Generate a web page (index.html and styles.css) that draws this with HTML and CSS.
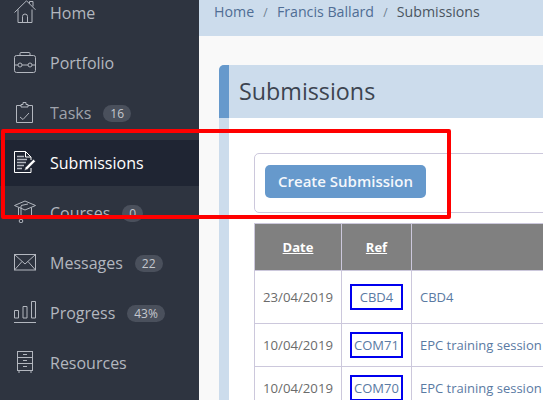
FILE: index.html
```html
<!DOCTYPE html>
<html lang="en">
<head>
    <meta charset="UTF-8">
    <meta name="viewport" content="width=device-width, initial-scale=1.0">
    <title>Submissions</title>
    <link rel="stylesheet" href="styles.css">
</head>
<body>
    <div class="layout">
        <!-- Sidebar -->
        <nav class="sidebar">
            <a class="nav-item" href="#">
                <svg class="nav-icon" viewBox="0 0 22 23"><path d="M.5 12.500 12.500.8l9 9M15.500 3.500V1.500h3.500v5M4 9.500v13h14V9.500M8.500 22.500V16.500a2.500 2.500 0 0 1 5 0v6"/></svg>
                <span>Home</span>
            </a>
            <a class="nav-item" href="#">
                <svg class="nav-icon" viewBox="0 0 22 23"><rect x=".5" y="5.500" width="21" height="17" rx="2"/><path d="M6 5.500V3.500a1 1 0 0 1 1-1h8a1 1 0 0 1 1 1v2M.5 15H4M8 15h6M18 15h3.500"/><circle cx="6" cy="15" r="2"/><circle cx="16" cy="15" r="2"/></svg>
                <span>Portfolio</span>
            </a>
            <a class="nav-item" href="#">
                <svg class="nav-icon" viewBox="0 0 22 23"><path d="M7 5.500H2.500v17h16v-17H14M7 7V4.500h2V2.500h3v2h2V7zM6 17l3 2.500 6-6.500"/></svg>
                <span class="dim">Tasks</span>
                <span class="badge">16</span>
            </a>
            <a class="nav-item active" href="#">
                <svg class="nav-icon" viewBox="0 0 22 23"><path d="M17 10V7l-5.500-5.500H.5v21H17V18M11.500 1.500V7H17"/><path class="doc-lines" d="M3 6.500h7M3 9.500h10M3 12.500h9M3 15.500h7M3 18.500h5"/><path class="pen" d="M10.500 20.500l.8-3 8.200-8.200 2 2-8.200 8.200z"/></svg>
                <span>Submissions</span>
            </a>
            <a class="nav-item" href="#">
                <svg class="nav-icon" viewBox="0 0 22 23"><path d="M11 1 .5 5.500 11 10l10.500-4.500zM4.500 7.500V15c3 2.500 10 2.500 13 0V7.500M7 5.500l7-1.500M7 6v13"/><circle cx="7" cy="21" r="1.800"/></svg>
                <span>Courses</span>
                <span class="badge">0</span>
            </a>
            <a class="nav-item" href="#">
                <svg class="nav-icon" viewBox="0 0 22 23"><rect x=".5" y="4.500" width="21" height="15.500"/><path d="M.5 4.500 11 14 21.500 4.500M.5 20l7.500-8.500M21.500 20 14 11.500"/></svg>
                <span>Messages</span>
                <span class="badge">22</span>
            </a>
            <a class="nav-item" href="#">
                <svg class="nav-icon" viewBox="0 0 22 23"><path d="M0 22.500h22M.5 10.500h4v7.500h-4zM9 6.500h4V18H9zM17.500 1.500h4V18h-4z"/></svg>
                <span>Progress</span>
                <span class="badge">43%</span>
            </a>
            <a class="nav-item" href="#">
                <svg class="nav-icon" viewBox="0 0 22 23"><rect x="3.500" y="1.500" width="15" height="19"/><path d="M3.500 7.500h15M3.500 13.500h15M9 4.500h4M9 10.500h4M9 16.500h4M5 20.500V23M17 20.500V23"/></svg>
                <span>Resources</span>
            </a>
        </nav>

        <main class="content">
            <div class="breadcrumb">
                <a href="#">Home</a>
                <span class="sep">/</span>
                <a href="#">Francis Ballard</a>
                <span class="sep">/</span>
                <span class="current">Submissions</span>
            </div>

            <section class="panel">
                <h1 class="panel-title">Submissions</h1>
                <div class="panel-body">
                    <div class="toolbar">
                        <a class="btn" href="#">Create Submission</a>
                    </div>
                    <table class="grid">
                        <thead>
                            <tr>
                                <th class="col-date"><a href="#">Date</a></th>
                                <th class="col-ref"><a href="#">Ref</a></th>
                                <th><a href="#">Subject</a></th>
                            </tr>
                        </thead>
                        <tbody>
                            <tr class="row-tall">
                                <td class="cell-date">23/04/2019</td>
                                <td class="cell-ref"><a class="ref" href="#">CBD4</a></td>
                                <td><a href="#">CBD4</a></td>
                            </tr>
                            <tr>
                                <td class="cell-date">10/04/2019</td>
                                <td class="cell-ref"><a class="ref" href="#">COM71</a></td>
                                <td><a href="#">EPC training session</a></td>
                            </tr>
                            <tr>
                                <td class="cell-date">10/04/2019</td>
                                <td class="cell-ref"><a class="ref" href="#">COM70</a></td>
                                <td><a href="#">EPC training session</a></td>
                            </tr>
                        </tbody>
                    </table>
                </div>
            </section>
        </main>
    </div>

    <!-- Highlight drawn over the screenshot -->
    <div class="highlight"></div>
</body>
</html>
```

FILE: styles.css
```css
html, body {
    margin: 0;
    height: 100%;
    overflow: hidden;
}
body {
    font-family: "Open Sans", sans-serif;
    font-size: 14px;
    color: #555;
    background-color: #f9f9f9;
}
a {
    text-decoration: none;
}
.layout {
    display: flex;
    height: 400px;
}

/* Sidebar */
.sidebar {
    width: 199px;
    flex: none;
    background-color: #2e3440;
    overflow: hidden;
}
.nav-item {
    display: flex;
    align-items: center;
    height: 46px;
    margin-bottom: 4px;
    padding-left: 14px;
    color: #b3b7bf;
    font-size: 16px;
    position: relative;
    top: -10px;
}
.nav-item.active {
    background-color: #1f2533;
    color: #fff;
}
.nav-icon {
    width: 22px;
    height: 23px;
    flex: none;
    margin: -3px 14px 0 0;
    fill: none;
    stroke: currentColor;
    stroke-width: 1;
}
.active .nav-icon .pen {
    fill: #fff;
    stroke: #1f2533;
    stroke-width: .6;
}
.active .nav-icon .doc-lines {
    stroke: #b3b7bf;
    stroke-width: 1.4;
}
.dim {
    opacity: 0.85;
}
.badge {
    margin-left: 12px;
    padding: 0 7px;
    height: 17px;
    line-height: 17px;
    border-radius: 9px;
    background-color: #4a505c;
    color: #c5c8ce;
    font-size: 12px;
}

/* Main area */
.content {
    flex: none;
    width: 900px;
}
.breadcrumb {
    height: 36px;
    box-sizing: border-box;
    padding: 1px 0 0 15px;
    line-height: 21px;
    background-color: #ccdcec;
    font-size: 14.2px;
}
.breadcrumb a {
    color: #4f6d94;
}
.breadcrumb .sep {
    margin: 0 5.500px;
    color: #6f7f90;
    font-size: 12px;
}
.breadcrumb .current {
    color: #4a5560;
}
.panel {
    margin: 29px 0 0 20px;
    border-left: 10px solid #ccdcec;
    border-radius: 5px 0 0 0;
    background-color: #fff;
    position: relative;
}
.panel-title {
    margin: 0 0 0 -10px;
    height: 53px;
    box-sizing: border-box;
    padding-left: 10px;
    border-left: 10px solid #6699cc;
    border-radius: 5px 0 0 0;
    background-color: #ccdcec;
    font-size: 23.3px;
    font-weight: 400;
    line-height: 52px;
    color: #3c4450;
}
.panel-body {
    padding: 35px 0 0 25px;
}
.toolbar {
    box-sizing: border-box;
    height: 60px;
    padding: 11px 10px;
    border: 1px solid #ccc8dc;
    border-radius: 5px;
    margin-bottom: 10px;
}
.btn {
    display: block;
    width: 161px;
    height: 33px;
    line-height: 33px;
    text-align: center;
    border-radius: 5px;
    background-color: #6699cc;
    color: #f4f7fb;
    font-size: 15px;
    font-weight: 600;
}
.grid {
    width: 100%;
    border-collapse: collapse;
    font-size: 13px;
}
.grid th, .grid td {
    border: 1px solid #ccc8dc;
}
.grid th {
    height: 46px;
    background-color: #808080;
    padding: 0;
    font-size: 13px;
}
.grid th a {
    color: #fff;
    text-decoration: underline;
}
.col-date {
    width: 86px;
}
.col-ref {
    width: 69px;
}
.grid td {
    height: 42px;
    padding: 0 8px;
}
.grid td a {
    color: #5a7aa3;
}
.row-tall td {
    height: 52px;
}
.grid .cell-date {
    padding: 0;
    text-align: center;
    font-size: 13.200px;
    color: #6b6b6b;
}
.grid .cell-ref {
    padding: 0;
    text-align: center;
}
.ref {
    display: inline-block;
    box-sizing: border-box;
    width: 53px;
    height: 26px;
    line-height: 22px;
    border: 2px solid #0000ee;
    vertical-align: middle;
}

/* Highlight */
.highlight {
    position: absolute;
    left: 1px;
    top: 129px;
    width: 442px;
    height: 82px;
    border: 4px solid #f00;
    border-radius: 2px;
}
```
